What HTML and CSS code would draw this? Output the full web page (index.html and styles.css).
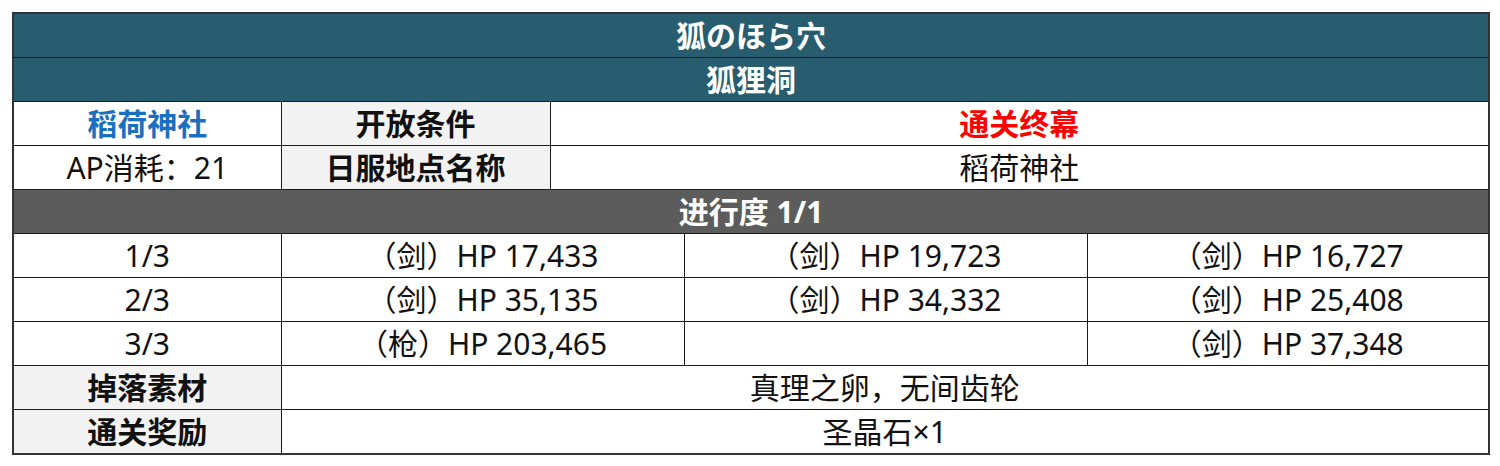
FILE: index.html
```html
<!DOCTYPE html>
<html lang="zh">
<head>
<meta charset="utf-8">
<link rel="stylesheet" href="styles.css">
</head>
<body>
<table class="quest">
  <colgroup>
    <col class="c-a"><col class="c-b"><col class="c-c"><col class="c-d"><col class="c-e">
  </colgroup>
  <tr><td colspan="5" class="head">狐のほら穴</td></tr>
  <tr><td colspan="5" class="head">狐狸洞</td></tr>
  <tr>
    <td class="place">稻荷神社</td>
    <td class="label">开放条件</td>
    <td colspan="3" class="cond">通关终幕</td>
  </tr>
  <tr>
    <td>AP消耗：21</td>
    <td class="label">日服地点名称</td>
    <td colspan="3">稻荷神社</td>
  </tr>
  <tr><td colspan="5" class="progress">进行度 1/1</td></tr>
  <tr>
    <td>1/3</td>
    <td colspan="2">（剑）HP 17,433</td>
    <td>（剑）HP 19,723</td>
    <td>（剑）HP 16,727</td>
  </tr>
  <tr>
    <td>2/3</td>
    <td colspan="2">（剑）HP 35,135</td>
    <td>（剑）HP 34,332</td>
    <td>（剑）HP 25,408</td>
  </tr>
  <tr>
    <td>3/3</td>
    <td colspan="2">（枪）HP 203,465</td>
    <td></td>
    <td>（剑）HP 37,348</td>
  </tr>
  <tr>
    <td class="label">掉落素材</td>
    <td colspan="4">真理之卵，无间齿轮</td>
  </tr>
  <tr>
    <td class="label">通关奖励</td>
    <td colspan="4">圣晶石×1</td>
  </tr>
</table>
</body>
</html>
```

FILE: styles.css
```css
html, body {
  margin: 0;
  padding: 0;
  background: #ffffff;
}
body {
  padding: 12px;
  font-family: "Noto Sans", "Noto Sans CJK SC", sans-serif;
}
.quest {
  width: 1476px;
  border-collapse: collapse;
  table-layout: fixed;
  border: 2px solid #333;
  font-size: 30px;
  color: #111;
}
.c-a { width: 268px; }
.c-b { width: 269px; }
.c-c { width: 134px; }
.c-d { width: 403px; }
.c-e { width: 402px; }
.quest td {
  height: 43px;
  padding: 0;
  border: 1px solid #1a1a1a;
  text-align: center;
  vertical-align: middle;
  line-height: 1;
  white-space: nowrap;
}
.quest td.head {
  background: #285d6f;
  color: #ffffff;
  font-weight: 700;
}
.quest td.progress {
  background: #5c5c5c;
  color: #ffffff;
  font-weight: 700;
}
.quest td.label {
  background: #f2f2f2;
  font-weight: 700;
}
.quest td.place {
  color: #1b6fc0;
  font-weight: 700;
}
.quest td.cond {
  color: #ff0000;
  font-weight: 700;
}
```
